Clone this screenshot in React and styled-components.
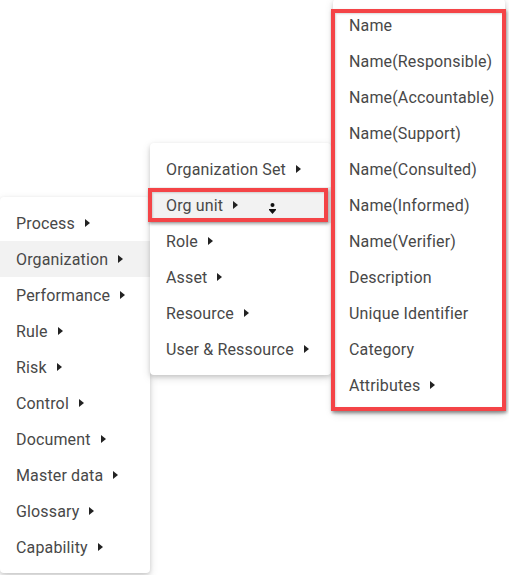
import React from "react";
import styled, { createGlobalStyle } from "styled-components";

const Global = createGlobalStyle`
  html, body { margin: 0; padding: 0; background: #ffffff; }
  body { font-family: Roboto, "Noto Sans", Arial, sans-serif; }
`;

const Stage = styled.div`
  position: relative;
  width: 509px;
  height: 575px;
  overflow: hidden;
  background: #ffffff;
`;

const Menu = styled.ul`
  position: absolute;
  left: ${(p) => p.$left}px;
  top: ${(p) => p.$top}px;
  width: ${(p) => p.$width}px;
  margin: 0;
  padding: 8px 0;
  list-style: none;
  display: flex;
  flex-direction: column;
  background: #ffffff;
  border-radius: 4px;
  box-shadow: 0 2px 4px rgba(0, 0, 0, 0.14), 0 3px 10px rgba(0, 0, 0, 0.12);
  box-sizing: border-box;
`;

const Item = styled.li`
  display: flex;
  align-items: center;
  gap: 10px;
  height: 36px;
  padding: 0 16px;
  font-size: 16px;
  letter-spacing: 0.15px;
  color: #484848;
  white-space: nowrap;
  background: ${(p) => (p.$active ? "#f2f2f2" : "transparent")};
`;

const Caret = styled.span`
  display: inline-block;
  width: 0;
  height: 0;
  border-top: 4px solid transparent;
  border-bottom: 4px solid transparent;
  border-left: 5px solid #222;
`;

const Highlight = styled.div`
  position: absolute;
  left: ${(p) => p.$left}px;
  top: ${(p) => p.$top}px;
  width: ${(p) => p.$width}px;
  height: ${(p) => p.$height}px;
  border: 4px solid #f44447;
  box-sizing: border-box;
  box-shadow: 1px 2px 3px rgba(0, 0, 0, 0.35), inset 1px 1px 2px rgba(0, 0, 0, 0.15);
  pointer-events: none;
`;

const Cursor = styled.svg`
  position: absolute;
  left: 267px;
  top: 201px;
`;

const menu1 = [
  "Process",
  "Organization",
  "Performance",
  "Rule",
  "Risk",
  "Control",
  "Document",
  "Master data",
  "Glossary",
  "Capability",
];

const menu2 = [
  "Organization Set",
  "Org unit",
  "Role",
  "Asset",
  "Resource",
  "User & Ressource",
];

const menu3 = [
  ["Name", false],
  ["Name(Responsible)", false],
  ["Name(Accountable)", false],
  ["Name(Support)", false],
  ["Name(Consulted)", false],
  ["Name(Informed)", false],
  ["Name(Verifier)", false],
  ["Description", false],
  ["Unique Identifier", false],
  ["Category", false],
  ["Attributes", true],
];

export default function App() {
  return (
    <>
      <Global />
      <Stage>
        <Menu $left={0} $top={197} $width={150}>
          {menu1.map((t) => (
            <Item key={t} $active={t === "Organization"}>
              {t}
              <Caret />
            </Item>
          ))}
        </Menu>
        <Menu $left={150} $top={143} $width={181}>
          {menu2.map((t) => (
            <Item key={t} $active={t === "Org unit"}>
              {t}
              <Caret />
            </Item>
          ))}
        </Menu>
        <Highlight $left={148} $top={188} $width={180} $height={34} />
        <Cursor width="12" height="16" viewBox="0 0 12 16">
          <circle cx="5.5" cy="4" r="2" fill="#111" />
          <path d="M2 9 L9 9 L5.5 13 Z" fill="#111" />
          <rect x="2" y="8" width="7" height="1" fill="#111" />
        </Cursor>
        <Menu $left={333} $top={-1} $width={172}>
          {menu3.map(([t, sub]) => (
            <Item key={t}>
              {t}
              {sub && <Caret />}
            </Item>
          ))}
        </Menu>
        <Highlight $left={331} $top={9} $width={175} $height={402} />
      </Stage>
    </>
  );
}
